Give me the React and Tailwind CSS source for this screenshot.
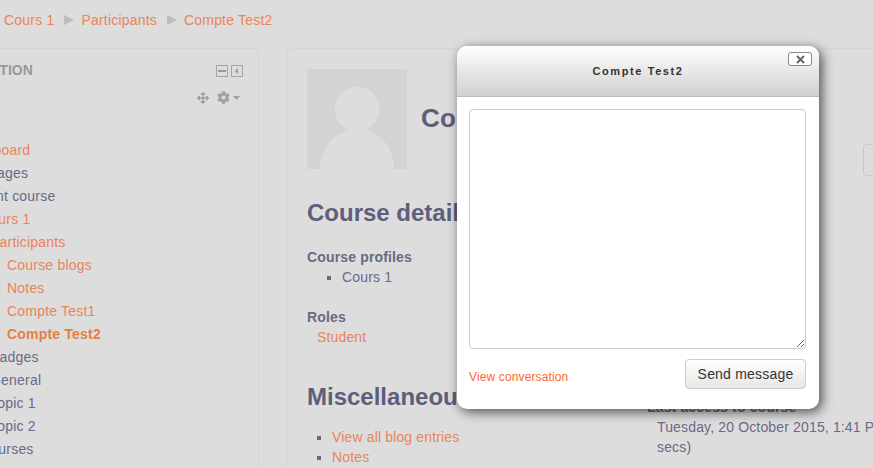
import { FaArrowsAlt, FaCog } from 'react-icons/fa'

const NAV_ITEMS = [
  { label: 'Dashboard', link: true, indent: 'pl-0' },
  { label: 'Site pages', indent: 'pl-0' },
  { label: 'Current course', indent: 'pl-0' },
  { label: 'Cours 1', link: true, indent: 'pl-[20px]' },
  { label: 'Participants', link: true, indent: 'pl-[30px]' },
  { label: 'Course blogs', link: true, indent: 'pl-[47px]' },
  { label: 'Notes', link: true, indent: 'pl-[47px]' },
  { label: 'Compte Test1', link: true, indent: 'pl-[47px]' },
  { label: 'Compte Test2', link: true, bold: true, indent: 'pl-[47px]' },
  { label: 'Badges', indent: 'pl-[30px]' },
  { label: 'General', indent: 'pl-[30px]' },
  { label: 'Topic 1', indent: 'pl-[30px]' },
  { label: 'Topic 2', indent: 'pl-[30px]' },
  { label: 'My courses', indent: 'pl-0' },
]

const Crumb = ({ children }) => <span className="text-[#e9845a]">{children}</span>

const Sep = () => (
  <svg width="10" height="10" viewBox="0 0 10 10" className="mx-[7px]">
    <path d="M0 0 L10 5 L0 10 Z" fill="#bcbcbc" />
  </svg>
)

const Sidebar = () => (
  <aside className="w-[319px] -ml-[60px] shrink-0 rounded border border-[#d6d6d6] pl-[19px] pr-[14px] pt-[11px] h-[500px]">
    <div className="flex items-start justify-between h-[79px]">
      <h2 className="-ml-[13px] text-[14px] font-bold leading-[20px] text-[#999]">NAVIGATION</h2>
      <div className="flex flex-col items-end">
        <div className="flex gap-[3px] mt-[5px] mr-[1px]">
          <svg width="12" height="12" viewBox="0 0 12 12">
            <rect x="0.5" y="0.5" width="11" height="11" fill="none" stroke="#a5a5a5" />
            <rect x="2" y="5" width="8" height="2" fill="#999" />
          </svg>
          <svg width="12" height="12" viewBox="0 0 12 12">
            <rect x="0.5" y="0.5" width="11" height="11" fill="none" stroke="#a5a5a5" />
            <path d="M7 3 L4 6 L7 9 Z" fill="#999" />
          </svg>
        </div>
        <div className="flex items-center mt-[14px] text-[#a0a0a0]">
          <FaArrowsAlt size={12} />
          <FaCog size={13} className="ml-[8px]" />
          <svg width="7" height="4" viewBox="0 0 7 4" className="ml-[3px] mr-[4px]">
            <path d="M0 0 H7 L3.5 4 Z" fill="#a0a0a0" />
          </svg>
        </div>
      </div>
    </div>
    <ul className="text-[14px] leading-[23px] tracking-[0.2px]">
      {NAV_ITEMS.map(item => (
        <li
          key={item.label}
          className={`${item.indent} whitespace-nowrap ${item.bold ? 'font-bold text-[#e5803f]' : item.link ? 'text-[#e9845a]' : 'text-[#6a6a86]'}`}
        >
          {item.label}
        </li>
      ))}
    </ul>
  </aside>
)

const MainCard = () => (
  <main className="ml-[28px] w-[700px] shrink-0 rounded border border-[#d6d6d6] pl-[19px] pt-[20px] h-[500px] text-[14px] leading-[20px] tracking-[0.15px] text-[#6a6a86]">
    <div className="flex h-[100px] w-[640px] justify-between">
      <div className="flex items-center gap-[14px]">
        <svg width="100" height="100" viewBox="0 0 100 100" className="shrink-0">
          <rect width="100" height="100" fill="#d3d3d3" />
          <circle cx="50" cy="40" r="22.5" fill="#dddddd" />
          <path d="M13 100 C13 76 30 60 50 60 C70 60 87 76 87 100 Z" fill="#dddddd" />
        </svg>
        <span className="text-[26px] leading-[32px] font-bold text-[#5e5e7c] whitespace-nowrap mt-[-2px]">Compte Test2</span>
      </div>
      <div className="mt-[75px] h-[32px] w-[84px] shrink-0 rounded border border-[#c8c8c8] bg-[#dcdcdc]" />
    </div>
    <div className="flex">
      <div className="w-[340px] shrink-0">
        <h2 className="mt-[24px] text-[24px] leading-[40px] tracking-normal font-bold text-[#5e5e7c]">Course details</h2>
        <p className="mt-[14px] font-bold">Course profiles</p>
        <ul className="pl-[35px] list-[square]">
          <li>Cours 1</li>
        </ul>
        <p className="mt-[20px] font-bold">Roles</p>
        <p className="pl-[10px] text-[#e9845a]">Student</p>
        <h2 className="mt-[30px] text-[24px] leading-[40px] tracking-normal font-bold text-[#5e5e7c]">Miscellaneous</h2>
        <ul className="mt-[10px] pl-[25px] list-[square]">
          <li><span className="text-[#e9845a]">View all blog entries</span></li>
          <li><span className="text-[#e9845a]">Notes</span></li>
        </ul>
      </div>
      <div className="mt-[228px] whitespace-nowrap">
        <p className="font-bold">Last access to course</p>
        <p className="pl-[10px]">
          Tuesday, 20 October 2015, 1:41 PM (1 min 20
          <br />
          secs)
        </p>
      </div>
    </div>
  </main>
)

const MessageDialog = () => (
  <div className="absolute left-[457px] top-[46px] w-[362px] h-[363px] rounded-[10px] bg-white shadow-[3px_3px_12px_rgba(0,0,0,0.65)] flex flex-col">
    <div className="relative h-[51px] shrink-0 rounded-t-[10px] border-b border-[#bbb] bg-gradient-to-b from-white to-[#d0d0d0] flex items-center justify-center">
      <span className="text-[11px] font-bold tracking-[1.6px] text-[#333]">Compte Test2</span>
      <button className="absolute right-[7px] top-[6px] w-[24px] h-[14px] rounded-[3px] border border-[#888] bg-white flex items-center justify-center">
        <svg width="9" height="9" viewBox="0 0 9 9">
          <path d="M1 1 L8 8 M8 1 L1 8" stroke="#666" strokeWidth="2" />
        </svg>
      </button>
    </div>
    <div className="px-[12px] pt-[12px] flex flex-col">
      <textarea className="w-[337px] h-[240px] rounded border border-[#ccc] bg-white" />
      <div className="flex items-end justify-between mt-[10px]">
        <span className="mb-[2px] text-[12px] leading-[20px] tracking-[0.13px] text-[#f9683a]">View conversation</span>
        <button className="w-[121px] h-[30px] rounded border border-[#ccc] bg-gradient-to-b from-white to-[#e6e6e6] text-[14px] tracking-[0.2px] text-[#333] mr-[1px]">
          Send message
        </button>
      </div>
    </div>
  </div>
)

export default function App() {
  return (
    <div className="relative w-[873px] h-[468px] overflow-hidden bg-[#dddddd] font-['Liberation_Sans',Arial,sans-serif]">
      <nav className="h-[48px] pl-[4px] pt-[10px] flex items-start text-[14px] leading-[20px] tracking-[0.2px]">
        <Crumb>Cours 1</Crumb>
        <span className="h-[20px] flex items-center ml-[3px]"><Sep /></span>
        <Crumb>Participants</Crumb>
        <span className="h-[20px] flex items-center ml-[3px]"><Sep /></span>
        <Crumb>Compte Test2</Crumb>
      </nav>
      <div className="flex">
        <Sidebar />
        <MainCard />
      </div>
      <MessageDialog />
    </div>
  )
}
